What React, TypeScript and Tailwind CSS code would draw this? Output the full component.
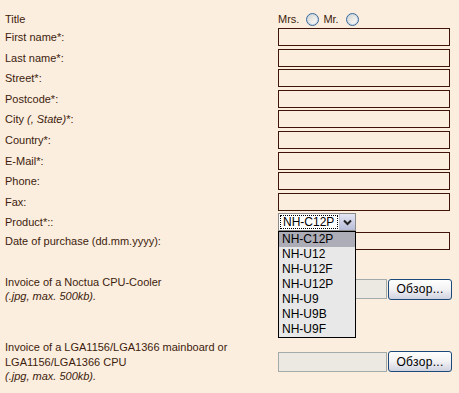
import React from "react";

const font = "[font-family:'Liberation_Sans',Arial,sans-serif]";

const fields: { label: React.ReactNode; h: string }[] = [
  { label: "First name*:", h: "h-[21px]" },
  { label: "Last name*:", h: "h-[20px]" },
  { label: "Street*:", h: "h-[21px]" },
  { label: "Postcode*:", h: "h-[20px]" },
  {
    label: (
      <span>
        City <i>(, State)</i>*:
      </span>
    ),
    h: "h-[21px]",
  },
  { label: "Country*:", h: "h-[21px]" },
  { label: "E-Mail*:", h: "h-[20px]" },
  { label: "Phone:", h: "h-[21px]" },
  { label: "Fax:", h: "h-[20px]" },
];

const products = ["NH-C12P", "NH-U12", "NH-U12F", "NH-U12P", "NH-U9", "NH-U9B", "NH-U9F"];

function Radio() {
  return (
    <span className="inline-block w-[13px] h-[13px] rounded-full border border-[#3a6a98] bg-linear-to-br from-[#d4d4ce] to-white shadow-[inset_0_0_0_1px_#c9d6e3]" />
  );
}

function TextInput() {
  return <div className="w-[172px] h-[18px] border border-[#3f1507]" />;
}

function FileInput() {
  return (
    <div className="flex items-center gap-[1px]">
      <div className="w-[109px] h-[20px] border border-[#a3aaaa] bg-[#ebe9e1]" />
      <div className="w-[64px] h-[21px] rounded-[3px] border border-[#1b4a7a] bg-linear-to-b from-white via-[#f2f2f4] to-[#d0d2e0] flex items-center justify-center text-[12px] text-black tracking-[0.3px]">
        Обзор...
      </div>
    </div>
  );
}

export default function App() {
  return (
    <div className={`w-[459px] min-h-[393px] bg-[#fbeedf] text-[#401c0c] text-[11px] ${font}`}>
      {/* Title row */}
      <div className="flex items-center h-[28px] pt-[10px]">
        <div className="w-[278px] pl-[5px] shrink-0">Title</div>
        <div className="flex items-center">
          <span className="mr-[7px]">Mrs.</span>
          <Radio />
          <span className="ml-[4px] mr-[7px]">Mr.</span>
          <Radio />
        </div>
      </div>

      {fields.map((f, i) => (
        <div key={i} className={`flex items-start ${f.h}`}>
          <div className="w-[278px] pl-[5px] shrink-0 h-[18px] flex items-center">{f.label}</div>
          <TextInput />
        </div>
      ))}

      {/* Product select */}
      <div className="flex items-start h-[19px]">
        <div className="w-[278px] pl-[5px] shrink-0 h-[18px] flex items-center">Product*::</div>
        <div className="relative z-10">
          <div className="w-[78px] h-[18px] border border-[#8a8a8a] bg-white flex items-stretch">
            <div className="flex-1 m-[1px] border border-dotted border-black flex items-center pl-[2px] text-[12px] text-black">
              NH-C12P
            </div>
            <div className="w-[16px] bg-linear-to-b from-[#e4e6f4] to-[#b8bcd8] border-l border-[#c0c4d8] flex items-center justify-center">
              <svg width="9" height="7" viewBox="0 0 9 7">
                <path d="M1 1.5 L4.5 5 L8 1.5" fill="none" stroke="#222" strokeWidth="2" />
              </svg>
            </div>
          </div>
          <div className="absolute left-0 top-[18px] w-[78px] border border-black bg-[#e8e8e8] text-[12px] text-black">
            {products.map((p, i) => (
              <div
                key={p}
                className={`h-[15px] leading-[15px] pl-[3px] ${i === 0 ? "bg-[#adadb7]" : ""}`}
              >
                {p}
              </div>
            ))}
          </div>
        </div>
      </div>

      {/* Date */}
      <div className="flex items-start h-[18px]">
        <div className="w-[278px] pl-[5px] shrink-0 h-[18px] flex items-center">Date of purchase (dd.mm.yyyy):</div>
        <TextInput />
      </div>

      {/* Invoice 1 */}
      <div className="flex items-center mt-[25px] leading-[14px]">
        <div className="w-[278px] pl-[5px] shrink-0">
          <div>Invoice of a Noctua CPU-Cooler</div>
          <div className="italic">(.jpg, max. 500kb).</div>
        </div>
        <FileInput />
      </div>

      {/* Invoice 2 */}
      <div className="flex items-center mt-[37px] leading-[14.5px]">
        <div className="w-[278px] pl-[5px] shrink-0">
          <div>Invoice of a LGA1156/LGA1366 mainboard or</div>
          <div>LGA1156/LGA1366 CPU</div>
          <div className="italic">(.jpg, max. 500kb).</div>
        </div>
        <FileInput />
      </div>
    </div>
  );
}
